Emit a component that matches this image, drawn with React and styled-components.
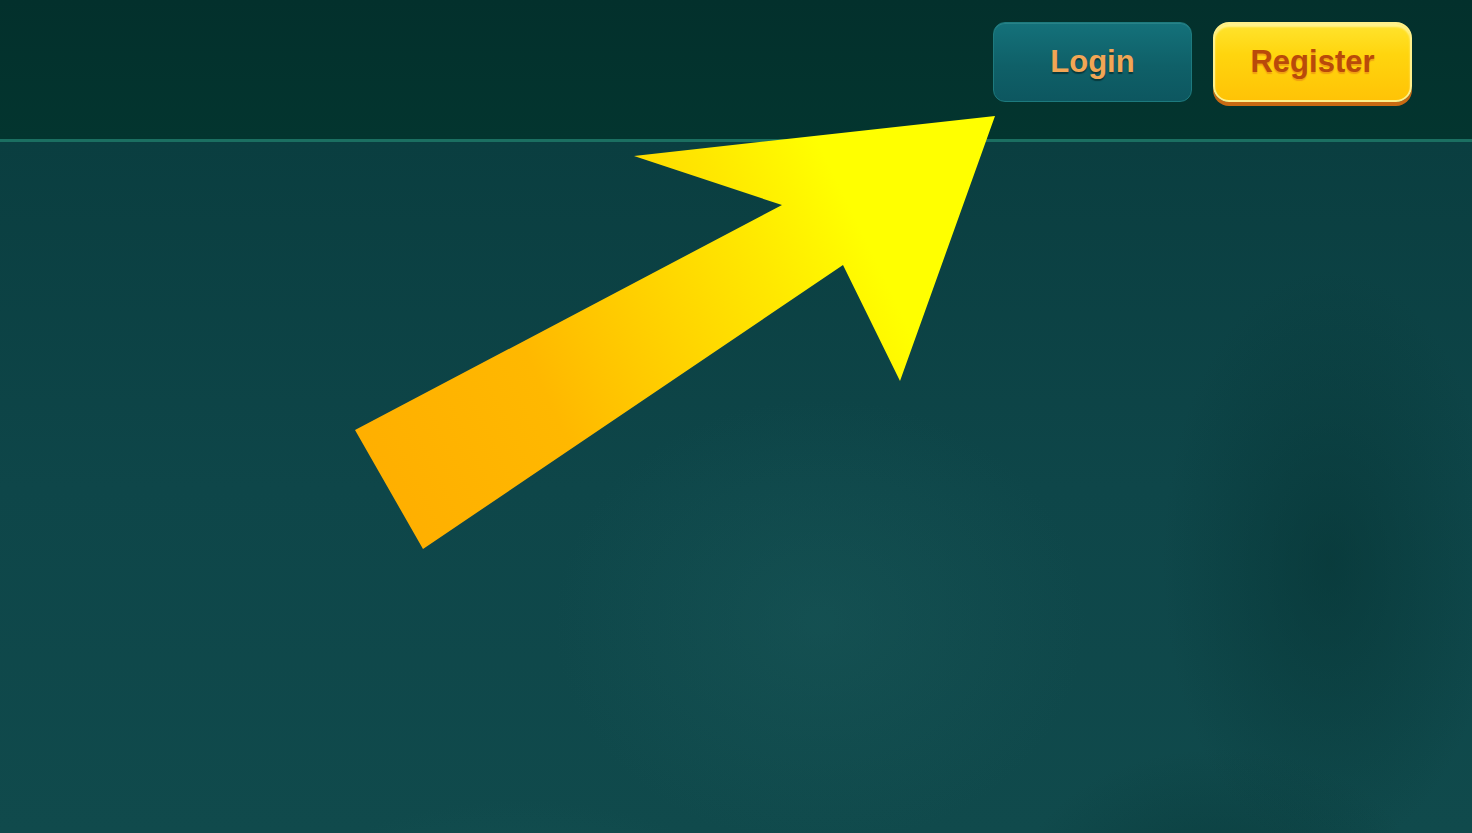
import React from "react";
import styled, { createGlobalStyle } from "styled-components";

const Global = createGlobalStyle`
  html, body { margin: 0; padding: 0; height: 100%; }
  body { background: #0c4244; font-family: "Liberation Sans", Arial, sans-serif; overflow: hidden; }
  #root { height: 100%; }
`;

const Page = styled.div`
  position: relative;
  width: 100%;
  height: 833px;
  display: flex;
  flex-direction: column;
  overflow: hidden;
`;

const Header = styled.header`
  height: 142px;
  flex: none;
  background: linear-gradient(180deg, #03302c 0%, #03352f 100%);
  border-bottom: 3px solid #1b6f61;
  display: flex;
  justify-content: flex-end;
  align-items: flex-start;
  padding: 22px 60px 0 0;
  gap: 21px;
  box-sizing: border-box;
`;

const Button = styled.button`
  width: 199px;
  height: 80px;
  font-family: "Liberation Sans", Arial, sans-serif;
  font-weight: 700;
  font-size: 31px;
  cursor: pointer;
  display: flex;
  align-items: center;
  justify-content: center;
  padding: 0;
  box-sizing: border-box;
  ${(p) =>
    p.$variant === "primary"
      ? `
    border-radius: 16px;
    background: linear-gradient(180deg, #ffe42e 0%, #ffd50e 40%, #ffc306 100%);
    border: 2px solid #fff08a;
    color: #b94a0a;
    text-shadow: 0 2px 1px rgba(230, 130, 20, 0.6);
    box-shadow: 0 4px 0 #c96a12, inset 0 3px 2px rgba(255,255,220,0.55);
  `
      : `
    border-radius: 12px;
    background: linear-gradient(180deg, #14717a 0%, #0f6068 55%, #0d5760 100%);
    border: 1px solid #1d7a7e;
    color: #f2a655;
    text-shadow: 0 2px 1px rgba(0, 30, 30, 0.55);
    box-shadow: inset 0 1px 0 rgba(90,170,170,0.3);
  `}
`;

const Body = styled.main`
  flex: 1;
  background:
    radial-gradient(ellipse 240px 420px at 1330px 420px, rgba(5, 50, 50, 0.55), transparent 70%),
    radial-gradient(ellipse 300px 220px at 1220px 760px, rgba(5, 50, 50, 0.5), transparent 70%),
    radial-gradient(ellipse 380px 320px at 820px 480px, rgba(30, 95, 95, 0.35), transparent 70%),
    radial-gradient(ellipse 420px 260px at 520px 840px, rgba(30, 95, 95, 0.45), transparent 70%),
    linear-gradient(180deg, #0a3e40 0%, #0e4649 50%, #104a4c 100%);
`;

const ArrowLayer = styled.svg`
  position: absolute;
  inset: 0;
  width: 1472px;
  height: 833px;
  pointer-events: none;
`;

export default function App() {
  return (
    <>
      <Global />
      <Page>
        <Header>
          <Button>Login</Button>
          <Button $variant="primary">Register</Button>
        </Header>
        <Body />
        <ArrowLayer viewBox="0 0 1472 833">
          <defs>
            <linearGradient id="arrowGrad" x1="355" y1="490" x2="995" y2="180" gradientUnits="userSpaceOnUse">
              <stop offset="0" stopColor="#ffae00" />
              <stop offset="0.3" stopColor="#ffb800" />
              <stop offset="0.65" stopColor="#ffe800" />
              <stop offset="0.8" stopColor="#ffff00" />
              <stop offset="1" stopColor="#ffff00" />
            </linearGradient>
          </defs>
          <polygon
            points="995,116 900,381 843,265 423,549 355,430 782,205 634,156"
            fill="url(#arrowGrad)"
          />
        </ArrowLayer>
      </Page>
    </>
  );
}
